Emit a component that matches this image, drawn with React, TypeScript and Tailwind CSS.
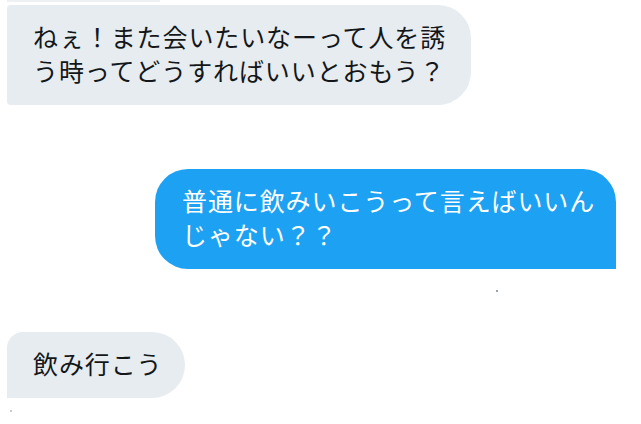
const Bubble = ({
  children,
  className,
}: {
  children: React.ReactNode;
  className: string;
}) => (
  <div
    className={`pt-[14px] pb-[18px] text-[25px] leading-[34px] tracking-[0.9px] whitespace-nowrap ${className}`}
  >
    {children}
  </div>
);

export default function App() {
  return (
    <div
      className="w-[641px] h-[424px] bg-white overflow-hidden flex flex-col"
      style={{ fontFamily: '"Noto Sans CJK JP", "Noto Sans", sans-serif' }}
    >
      <div className="ml-[7px] w-[153px] h-[2px] bg-[#eef1f4]"></div>

      <Bubble className="mt-[3px] ml-[7px] w-[464px] pl-[26px] bg-[#e6ecf0] text-[#14171a] rounded-l-[4px] rounded-r-[33px]">
        ねぇ！また会いたいなーって人を誘
        <br />
        う時ってどうすればいいとおもう？
      </Bubble>

      <Bubble className="mt-[64px] self-end mr-[25px] w-[461px] pl-[27px] bg-[#1da1f2] text-white rounded-tl-[33px] rounded-bl-[33px] rounded-tr-[33px]">
        普通に飲みいこうって言えばいいん
        <br />
        じゃない？？
      </Bubble>

      <div className="self-end mr-[143px] mt-[21px] w-[2px] h-[2px] bg-[#9aa4ad]"></div>

      <Bubble className="mt-[40px] ml-[7px] w-[178px] pl-[26px] bg-[#e6ecf0] text-[#14171a] rounded-tl-[16px] rounded-r-[33px]">
        飲み行こう
      </Bubble>

      <div className="ml-[10px] mt-[12px] w-[2px] h-[2px] bg-[#c9ced3]"></div>
    </div>
  );
}
